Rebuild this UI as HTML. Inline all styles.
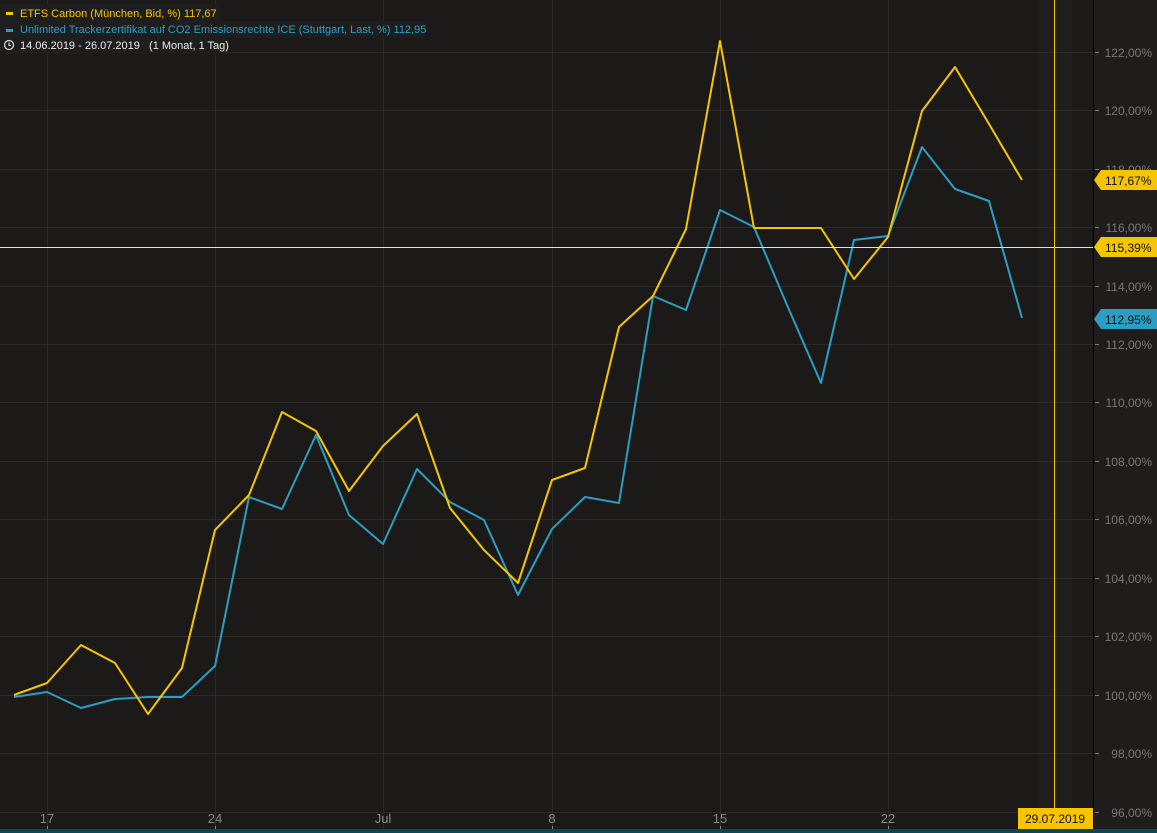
<!DOCTYPE html>
<html><head><meta charset="utf-8"><style>
body{margin:0;width:1157px;height:833px;background:#1b1a19;overflow:hidden;font-family:"Liberation Sans",sans-serif}
svg{position:absolute;left:0;top:0}
</style></head><body>
<svg width="1157" height="833" viewBox="0 0 1157 833">
<rect width="1157" height="833" fill="#1b1a19"/>
<rect x="1094" y="0" width="63" height="833" fill="#1e1d1c"/>
<rect x="1038" y="0" width="34" height="829" fill="#1f1e1c"/>
<g stroke="#2b2a28" stroke-width="1">
<line x1="0" y1="52.5" x2="1093" y2="52.5"/><line x1="0" y1="110.5" x2="1093" y2="110.5"/>
<line x1="0" y1="169.5" x2="1093" y2="169.5"/><line x1="0" y1="227.5" x2="1093" y2="227.5"/>
<line x1="0" y1="286.5" x2="1093" y2="286.5"/><line x1="0" y1="344.5" x2="1093" y2="344.5"/>
<line x1="0" y1="402.5" x2="1093" y2="402.5"/><line x1="0" y1="461.5" x2="1093" y2="461.5"/>
<line x1="0" y1="519.5" x2="1093" y2="519.5"/><line x1="0" y1="578.5" x2="1093" y2="578.5"/>
<line x1="0" y1="636.5" x2="1093" y2="636.5"/><line x1="0" y1="695.5" x2="1093" y2="695.5"/>
<line x1="0" y1="753.5" x2="1093" y2="753.5"/><line x1="0" y1="812.5" x2="1093" y2="812.5"/>
<line x1="47.5" y1="0" x2="47.5" y2="829"/><line x1="215.5" y1="0" x2="215.5" y2="829"/>
<line x1="383.5" y1="0" x2="383.5" y2="829"/><line x1="552.5" y1="0" x2="552.5" y2="829"/>
<line x1="720.5" y1="0" x2="720.5" y2="829"/><line x1="888.5" y1="0" x2="888.5" y2="829"/>
</g>
<line x1="1093.5" y1="0" x2="1093.5" y2="829" stroke="#000"/>
<rect x="0" y="829" width="1157" height="4" fill="#0b4652"/>
<polyline fill="none" stroke="#2c9ec4" stroke-width="2" stroke-linejoin="round" points="14,697 47,692 81,708 115,699 148,697 182,697 215,666 249,497 282,509 316,435 349,515 383,544 417,469 450,502 484,520 518,595 552,529 585,497 619,503 653,296 686,310 720,210 754,227 787,305 821,383 854,240 888,236 922,147 955,189 989,201 1022,318"/>
<polyline fill="none" stroke="#f7c500" stroke-width="2" stroke-linejoin="round" points="14,695 47,683 81,645 115,663 148,714 182,668 215,530 249,495 282,412 316,431 349,491 383,446 417,414 450,508 484,550 518,583 552,480 585,468 619,327 653,296 686,229 720,41 754,228 787,228 821,228 854,279 888,237 922,111 955,67 989,124 1022,180"/>
<line x1="0" y1="247.5" x2="1093" y2="247.5" stroke="#efe3a8" stroke-width="1"/>
<line x1="1054.5" y1="0" x2="1054.5" y2="829" stroke="#f7c500" stroke-width="1"/>
<g fill="#7a7875" font-size="12" text-anchor="end">
<g stroke="#7a7875"><line x1="1095" y1="52.5" x2="1099" y2="52.5"/><line x1="1095" y1="110.5" x2="1099" y2="110.5"/><line x1="1095" y1="169.5" x2="1099" y2="169.5"/><line x1="1095" y1="227.5" x2="1099" y2="227.5"/><line x1="1095" y1="286.5" x2="1099" y2="286.5"/><line x1="1095" y1="344.5" x2="1099" y2="344.5"/><line x1="1095" y1="402.5" x2="1099" y2="402.5"/><line x1="1095" y1="461.5" x2="1099" y2="461.5"/><line x1="1095" y1="519.5" x2="1099" y2="519.5"/><line x1="1095" y1="578.5" x2="1099" y2="578.5"/><line x1="1095" y1="636.5" x2="1099" y2="636.5"/><line x1="1095" y1="695.5" x2="1099" y2="695.5"/><line x1="1095" y1="753.5" x2="1099" y2="753.5"/><line x1="1095" y1="812.5" x2="1099" y2="812.5"/></g>
<text x="1152" y="57">122,00%</text><text x="1152" y="115">120,00%</text><text x="1152" y="174">118,00%</text><text x="1152" y="232">116,00%</text><text x="1152" y="291">114,00%</text><text x="1152" y="349">112,00%</text><text x="1152" y="407">110,00%</text><text x="1152" y="466">108,00%</text><text x="1152" y="524">106,00%</text><text x="1152" y="583">104,00%</text><text x="1152" y="641">102,00%</text><text x="1152" y="700">100,00%</text><text x="1152" y="758">98,00%</text><text x="1152" y="817">96,00%</text>
</g>
<g fill="#8a8885" font-size="13" text-anchor="middle">
<text x="47" y="823">17</text><text x="215" y="823">24</text><text x="383" y="823">Jul</text><text x="552" y="823">8</text><text x="720" y="823">15</text><text x="888" y="823">22</text>
</g>
<g stroke="#8a8885"><line x1="47.5" y1="826" x2="47.5" y2="829"/><line x1="215.5" y1="826" x2="215.5" y2="829"/><line x1="552.5" y1="826" x2="552.5" y2="829"/><line x1="720.5" y1="826" x2="720.5" y2="829"/><line x1="888.5" y1="826" x2="888.5" y2="829"/></g>
<g font-size="12" fill="#111">
<polygon points="1094,180 1101,170 1157,170 1157,190 1101,190" fill="#f7c500"/><text x="1105" y="185">117,67%</text>
<polygon points="1094,247 1101,237 1157,237 1157,257 1101,257" fill="#f7c500"/><text x="1105" y="252">115,39%</text>
<polygon points="1094,319 1101,309 1157,309 1157,329 1101,329" fill="#2c9ec4"/><text x="1105" y="324">112,95%</text>
<rect x="1018" y="808" width="75" height="21" fill="#f7c500"/><text x="1025" y="823">29.07.2019</text>
</g>
<rect x="0" y="4" width="220" height="17" fill="#1e1e1e"/>
<rect x="0" y="21" width="425" height="17" fill="#1e1e1e"/>
<rect x="0" y="38" width="228" height="16" fill="#1e1e1e"/>
<rect x="6" y="12" width="7" height="3" fill="#f7c500"/>
<text x="20" y="17" font-size="11" fill="#f7c500">ETFS Carbon (München, Bid, %)  117,67</text>
<rect x="6" y="29" width="7" height="3" fill="#2c9ec4"/>
<text x="20" y="33" font-size="11" fill="#2c9ec4">Unlimited Trackerzertifikat auf CO2 Emissionsrechte ICE (Stuttgart, Last, %)  112,95</text>
<circle cx="9" cy="45" r="4.5" fill="none" stroke="#ddd" stroke-width="1.2"/>
<path d="M9 42.5V45.5H11" fill="none" stroke="#ddd" stroke-width="1.1"/>
<text x="20" y="49" font-size="11" fill="#eee" xml:space="preserve">14.06.2019 - 26.07.2019   (1 Monat, 1 Tag)</text>
</svg>
</body></html>
